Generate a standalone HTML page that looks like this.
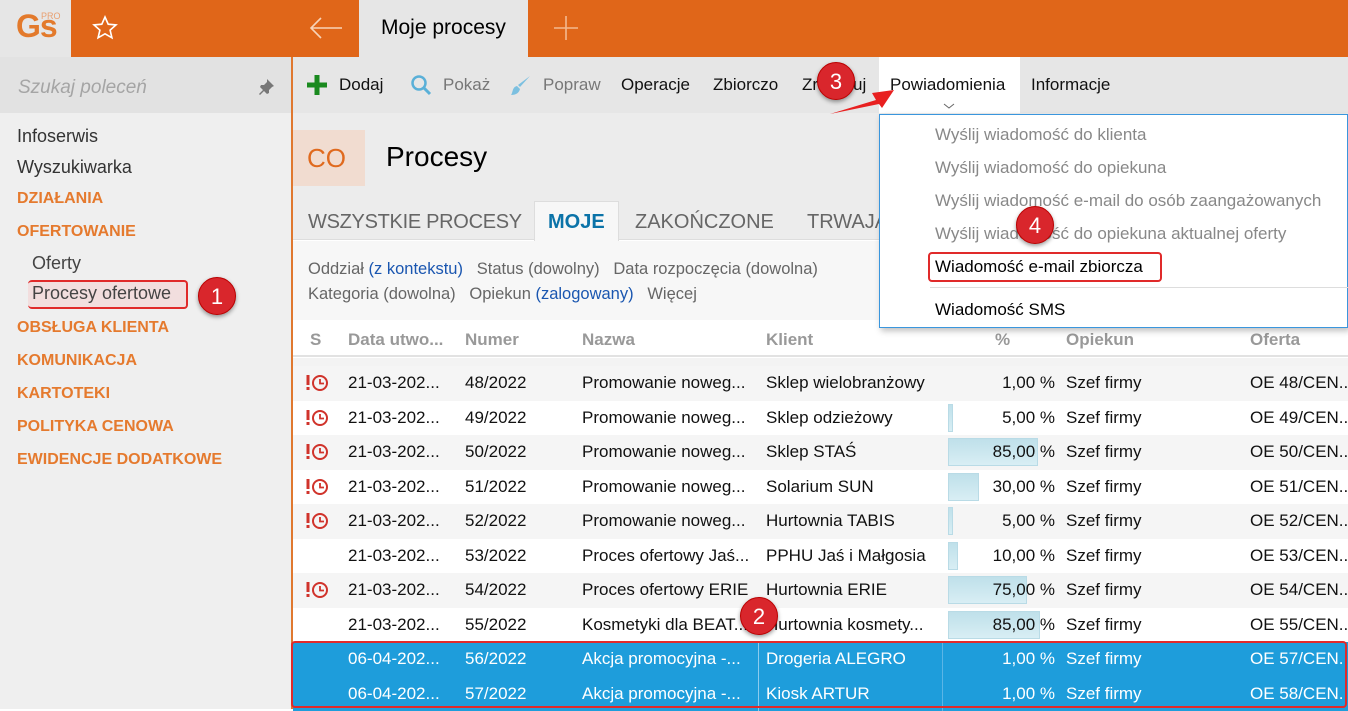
<!DOCTYPE html>
<html><head><meta charset="utf-8">
<style>
*{margin:0;padding:0;box-sizing:border-box}
body{width:1348px;height:709px;overflow:hidden;position:relative;font-family:"Segoe UI","Liberation Sans","DejaVu Sans",sans-serif;font-size:17px;color:#111;background:#fff}
.a{position:absolute;white-space:nowrap}
.or{color:#e57a2e;font-weight:bold;font-size:16px}
.row{position:absolute;left:293px;width:1055px;height:34.5px}
.row span{position:absolute;top:7px;white-space:nowrap}
.sel{background:#1e9ddb;color:#fff}
.badge{position:absolute;width:38px;height:38px;border-radius:50%;background:#d9262c;color:#fff;font-size:22px;text-align:center;line-height:38px;box-shadow:0 2px 4px rgba(0,0,0,.4);border:1px solid #b00}
.bar{position:absolute;left:655px;top:3px;height:28px;background:linear-gradient(#bfe0ea,#d8eef4);border:1px solid #b9dbe6}
</style></head><body>
<div class="a" style="left:0;top:0;width:71px;height:57px;background:#e6e6e6"></div>
<div class="a" style="left:16px;top:8px;font-size:32px;color:#e37a2c;font-weight:bold;letter-spacing:-1px;line-height:36px">Gs</div>
<div class="a" style="left:41px;top:11px;font-size:9px;color:#e9a070">PRO</div>
<div class="a" style="left:71px;top:0;width:288px;height:57px;background:#e06619"></div>
<svg class="a" style="left:92px;top:15px" width="26" height="26" viewBox="0 0 26 26"><path d="M13 2l3.2 7.2 7.8.7-5.9 5.2 1.8 7.7L13 18.8 6.1 22.8l1.8-7.7L2 9.9l7.8-.7z" fill="none" stroke="#fff" stroke-width="1.6"/></svg>
<svg class="a" style="left:308px;top:16px" width="36" height="24" viewBox="0 0 36 24"><path d="M34 12H3M13 2L3 12l10 10" fill="none" stroke="#f7d3b8" stroke-width="1.6"/></svg>
<div class="a" style="left:359px;top:0;width:169px;height:57px;background:#e6e6e6"></div>
<div class="a" style="left:381px;top:16px;font-size:21px;color:#000">Moje procesy</div>
<div class="a" style="left:528px;top:0;width:820px;height:57px;background:#e06619"></div>
<svg class="a" style="left:553px;top:15px" width="26" height="26"><path d="M13 1v24M1 13h24" stroke="#f3b88f" stroke-width="1.6"/></svg>
<div class="a" style="left:0;top:57px;width:291px;height:56px;background:#e2e2e2"></div>
<div class="a" style="left:18px;top:77px;font-size:19px;color:#a5a5a5;font-style:italic">Szukaj poleceń</div>
<svg class="a" style="left:257px;top:78px" width="18" height="18" viewBox="0 0 18 18"><path d="M10 1l7 7-2 1-3 3 0 3-2 1-3-3-4 4-1-1 4-4-3-3 1-2 3 0 3-3z" fill="#777"/></svg>
<div class="a" style="left:0;top:113px;width:291px;height:596px;background:#efefef"></div>
<div class="a" style="left:17px;top:126px;font-size:18px;color:#333">Infoserwis</div>
<div class="a" style="left:17px;top:157px;font-size:18px;color:#333">Wyszukiwarka</div>
<div class="a or" style="left:17px;top:190px">DZIAŁANIA</div>
<div class="a or" style="left:17px;top:223px">OFERTOWANIE</div>
<div class="a" style="left:32px;top:253px;font-size:18px;color:#444">Oferty</div>
<div class="a" style="left:28px;top:280px;width:160px;height:29px;border:2px solid #e02a2a;border-radius:4px;background:#f2dede;border-left:none"></div>
<div class="a" style="left:32px;top:283px;font-size:18px;color:#444">Procesy ofertowe</div>
<div class="badge" style="left:198px;top:277px">1</div>
<div class="a or" style="left:17px;top:319px">OBSŁUGA KLIENTA</div>
<div class="a or" style="left:17px;top:352px">KOMUNIKACJA</div>
<div class="a or" style="left:17px;top:385px">KARTOTEKI</div>
<div class="a or" style="left:17px;top:418px">POLITYKA CENOWA</div>
<div class="a or" style="left:17px;top:451px">EWIDENCJE DODATKOWE</div>
<div class="a" style="left:291px;top:57px;width:2px;height:652px;background:#e0782f"></div>
<div class="a" style="left:293px;top:57px;width:1055px;height:56px;background:#e6e6e6"></div>
<svg class="a" style="left:306px;top:74px" width="22" height="22"><path d="M11 1v20M1 11h20" stroke="#1a8a1f" stroke-width="5"/></svg>
<div class="a" style="left:339px;top:75px">Dodaj</div>
<svg class="a" style="left:410px;top:74px" width="22" height="22"><circle cx="9" cy="9" r="6.5" fill="none" stroke="#5ab0d8" stroke-width="2.5"/><path d="M14 14l6 6" stroke="#5ab0d8" stroke-width="3"/></svg>
<div class="a" style="left:443px;top:75px;color:#777">Pokaż</div>
<svg class="a" style="left:510px;top:74px" width="22" height="22"><path d="M20 2l-10 11-2-2z" fill="#7cc0e0"/><path d="M7 12l3 3c-1 4-4 6-9 6 2-2 1-8 6-9z" fill="#7cc0e0"/></svg>
<div class="a" style="left:543px;top:75px;color:#777">Popraw</div>
<div class="a" style="left:621px;top:75px">Operacje</div>
<div class="a" style="left:713px;top:75px">Zbiorczo</div>
<div class="a" style="left:802px;top:75px">Zrealizuj</div>
<div class="a" style="left:879px;top:57px;width:141px;height:56px;background:#fff"></div>
<div class="a" style="left:890px;top:75px">Powiadomienia</div>
<svg class="a" style="left:943px;top:103px" width="12" height="6"><path d="M1 1l5 4 5-4" fill="none" stroke="#666"/></svg>
<div class="a" style="left:1031px;top:75px">Informacje</div>
<div class="a" style="left:293px;top:113px;width:1055px;height:87px;background:#ececec"></div>
<div class="a" style="left:293px;top:130px;width:72px;height:56px;background:#f1dcd0"></div>
<div class="a" style="left:307px;top:143px;font-size:26px;color:#e06a1e">CO</div>
<div class="a" style="left:386px;top:141px;font-size:28px;color:#000">Procesy</div>
<div class="a" style="left:293px;top:200px;width:1055px;height:40px;background:#ececec;border-bottom:1px solid #ddd"></div>
<div class="a" style="left:308px;top:211px;font-size:20px;color:#666;letter-spacing:-.3px">WSZYSTKIE PROCESY</div>
<div class="a" style="left:534px;top:201px;width:85px;height:40px;background:#f7f7f7;border:1px solid #ddd;border-bottom:none"></div>
<div class="a" style="left:548px;top:211px;font-size:20px;color:#0b73a8;font-weight:bold">MOJE</div>
<div class="a" style="left:635px;top:211px;font-size:20px;color:#666">ZAKOŃCZONE</div>
<div class="a" style="left:807px;top:211px;font-size:20px;color:#666">TRWAJĄCE</div>
<div class="a" style="left:293px;top:241px;width:1055px;height:79px;background:#f7f7f7"></div>
<div class="a" style="left:308px;top:260px;font-size:16.5px;color:#666">Oddział <span style="color:#1a56b0">(z kontekstu)</span>&nbsp;&nbsp;&nbsp;Status (dowolny)&nbsp;&nbsp;&nbsp;Data rozpoczęcia (dowolna)</div>
<div class="a" style="left:308px;top:285px;font-size:16.5px;color:#666">Kategoria (dowolna)&nbsp;&nbsp;&nbsp;Opiekun <span style="color:#1a56b0">(zalogowany)</span>&nbsp;&nbsp;&nbsp;Więcej</div>
<div class="a" style="left:293px;top:320px;width:1055px;height:37px;background:#fff;border-bottom:2px solid #e2e2e2;color:#999;font-size:17px;font-weight:bold">
<span class="a" style="left:17px;top:10px">S</span><span class="a" style="left:55px;top:10px">Data utwo...</span><span class="a" style="left:172px;top:10px">Numer</span><span class="a" style="left:289px;top:10px">Nazwa</span><span class="a" style="left:473px;top:10px">Klient</span><span class="a" style="left:702px;top:10px">%</span><span class="a" style="left:773px;top:10px">Opiekun</span><span class="a" style="left:957px;top:10px">Oferta</span>
</div>
<div class="a" style="left:293px;top:358px;width:1055px;height:8px;background:#f3f3f3"></div>
<div id="rows"></div>
<script>
var d=[[1,"21-03-202...","48/2022","Promowanie noweg...","Sklep wielobranżowy",0,"1,00 %","OE 48/CEN..."],
[1,"21-03-202...","49/2022","Promowanie noweg...","Sklep odzieżowy",5,"5,00 %","OE 49/CEN..."],
[1,"21-03-202...","50/2022","Promowanie noweg...","Sklep STAŚ",90,"85,00 %","OE 50/CEN..."],
[1,"21-03-202...","51/2022","Promowanie noweg...","Solarium SUN",31,"30,00 %","OE 51/CEN..."],
[1,"21-03-202...","52/2022","Promowanie noweg...","Hurtownia TABIS",5,"5,00 %","OE 52/CEN..."],
[0,"21-03-202...","53/2022","Proces ofertowy Jaś...","PPHU Jaś i Małgosia",10,"10,00 %","OE 53/CEN..."],
[1,"21-03-202...","54/2022","Proces ofertowy ERIE","Hurtownia ERIE",79,"75,00 %","OE 54/CEN..."],
[0,"21-03-202...","55/2022","Kosmetyki dla BEAT...","Hurtownia kosmety...",92,"85,00 %","OE 55/CEN..."],
[0,"06-04-202...","56/2022","Akcja promocyjna -...","Drogeria ALEGRO",0,"1,00 %","OE 57/CEN..."],
[0,"06-04-202...","57/2022","Akcja promocyjna -...","Kiosk ARTUR",0,"1,00 %","OE 58/CEN..."]];
var h="";
d.forEach(function(r,i){var top=366+i*34.5;var s=i>=8;
var bg=s?"":(i%2==0?"background:#f5f5f5":"background:#fff");
h+='<div class="row'+(s?' sel':'')+'" style="top:'+top+'px;'+bg+'">';
if(s)h+='<div style="position:absolute;left:465px;top:0;width:1px;height:100%;background:#8ccbee"></div><div style="position:absolute;left:649px;top:0;width:1px;height:100%;background:#5bb5e6"></div>';
if(r[0])h+='<svg style="position:absolute;left:12px;top:8px" width="26" height="18"><rect x="1.5" y="1" width="3" height="10" fill="#d0332b"/><rect x="1.5" y="13" width="3" height="3" fill="#d0332b"/><circle cx="15" cy="9" r="7" fill="none" stroke="#d0332b" stroke-width="2"/><path d="M15 5v4.5h4" fill="none" stroke="#d0332b" stroke-width="1.8"/></svg>';
if(r[5])h+='<div class="bar" style="width:'+r[5]+'px"></div>';
h+='<span style="left:55px">'+r[1]+'</span><span style="left:172px">'+r[2]+'</span><span style="left:289px">'+r[3]+'</span><span style="left:473px">'+r[4]+'</span><span style="right:293px">'+r[6]+'</span><span style="left:773px">Szef firmy</span><span style="left:957px">'+r[7]+'</span></div>';});
document.getElementById("rows").innerHTML=h;
</script>
<div class="a" style="left:291px;top:641px;width:1056px;height:67px;border:2px solid #e02a2a;border-radius:4px"></div>
<div class="badge" style="left:740px;top:597px">2</div>
<div class="a" style="left:879px;top:114px;width:469px;height:214px;background:#fff;border:1px solid #3a96dd;box-shadow:2px 3px 6px rgba(0,0,0,.25)"></div>
<div class="a" style="left:935px;top:125px;color:#888">Wyślij wiadomość do klienta</div>
<div class="a" style="left:935px;top:158px;color:#888">Wyślij wiadomość do opiekuna</div>
<div class="a" style="left:935px;top:191px;color:#888">Wyślij wiadomość e-mail do osób zaangażowanych</div>
<div class="a" style="left:935px;top:224px;color:#888">Wyślij wiadomość do opiekuna aktualnej oferty</div>
<div class="a" style="left:928px;top:252px;width:234px;height:30px;border:2px solid #e02a2a;border-radius:4px"></div>
<div class="a" style="left:935px;top:257px;color:#000">Wiadomość e-mail zbiorcza</div>
<div class="a" style="left:930px;top:287px;width:418px;height:1px;background:#ddd"></div>
<div class="a" style="left:935px;top:300px;color:#000">Wiadomość SMS</div>
<div class="badge" style="left:1016px;top:206px">4</div>
<svg class="a" style="left:828px;top:84px" width="70" height="34"><path d="M2 30L48 16 44 9 66 6 54 24 51 20z" fill="#e82020"/></svg>
<div class="badge" style="left:817px;top:62px">3</div>
</body></html>
